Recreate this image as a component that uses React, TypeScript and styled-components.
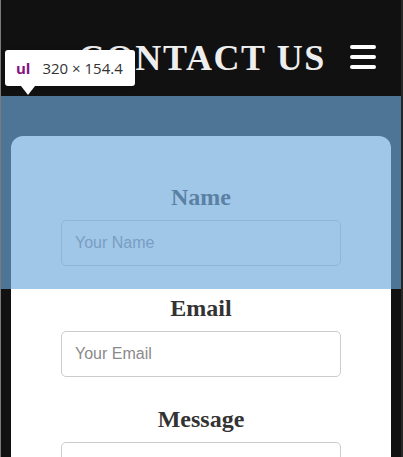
import React from "react";
import styled, { createGlobalStyle } from "styled-components";

const GlobalStyle = createGlobalStyle`
  html, body { margin: 0; padding: 0; background: #111; }
  * { box-sizing: border-box; }
`;

const Page = styled.div`
  position: relative;
  min-height: 457px;
  background: #111;
  border-left: 1px solid #7a7a7a;
  border-right: 2px solid #262626;
  overflow: hidden;
`;

const Header = styled.header`
  height: 96px;
  padding-top: 19px;
  display: grid;
  grid-template-columns: 1fr auto 1fr;
  align-items: center;
`;

const Title = styled.h1`
  grid-column: 2;
  margin: 0 0 0 2px;
  font-family: "Liberation Serif", "Times New Roman", serif;
  font-weight: 700;
  font-size: 36px;
  letter-spacing: 1.6px;
  color: #eee;
  white-space: nowrap;
`;

const MenuButton = styled.div`
  grid-column: 3;
  justify-self: end;
  margin-right: 25px;
  margin-top: -2px;
  display: flex;
  flex-direction: column;
  gap: 6px;
`;

const Bar = styled.span`
  display: block;
  width: 26px;
  height: 4px;
  border-radius: 2px;
  background: #fff;
`;

const Main = styled.main`
  padding: 40px 10px 0 10px;
`;

const Card = styled.form`
  background: #fff;
  border-radius: 12px;
  padding: 47px 50px 40px;
  display: flex;
  flex-direction: column;
  gap: 28px;
`;

const Field = styled.div`
  display: flex;
  flex-direction: column;
  gap: 9px;
`;

const Label = styled.label`
  display: block;
  text-align: center;
  font-family: "Liberation Serif", "Times New Roman", serif;
  font-weight: 700;
  font-size: 24px;
  line-height: 28px;
  color: #333;
`;

const Input = styled.input`
  width: 100%;
  height: 46px;
  border: 1px solid #ccc;
  border-radius: 5px;
  padding: 0 13px;
  font-family: "Liberation Sans", Arial, sans-serif;
  font-size: 16px;
  color: #333;
  background: #fff;
  outline: none;
  &::placeholder { color: #8a8a8a; }
`;

const Highlight = styled.div`
  position: absolute;
  left: 0;
  right: 0;
  top: 96px;
  height: 193px;
  background: rgba(111, 168, 220, 0.66);
  pointer-events: none;
`;

const Tooltip = styled.div`
  position: absolute;
  left: 4px;
  top: 50px;
  width: 130px;
  height: 36px;
  background: #fff;
  border-radius: 3px;
  box-shadow: 0 1px 4px rgba(0, 0, 0, 0.3);
  display: flex;
  align-items: center;
  gap: 12px;
  padding-left: 11px;
  font-family: "Open Sans", "Noto Sans", sans-serif;
  font-size: 15px;
  color: #333;
  &::after {
    content: "";
    position: absolute;
    left: 16px;
    bottom: -9px;
    border-left: 7px solid transparent;
    border-right: 7px solid transparent;
    border-top: 9px solid #fff;
  }
`;

const Tag = styled.span`
  color: #881280;
  font-weight: 700;
`;

export default function App() {
  return (
    <>
      <GlobalStyle />
      <Page>
        <Header>
          <Title>CONTACT US</Title>
          <MenuButton>
            <Bar />
            <Bar />
            <Bar />
          </MenuButton>
        </Header>
        <Main>
          <Card>
            <Field>
              <Label>Name</Label>
              <Input placeholder="Your Name" />
            </Field>
            <Field>
              <Label>Email</Label>
              <Input placeholder="Your Email" />
            </Field>
            <Field>
              <Label>Message</Label>
              <Input placeholder="Your Message" />
            </Field>
          </Card>
        </Main>
        <Highlight />
        <Tooltip>
          <Tag>ul</Tag>
          <span>320 × 154.4</span>
        </Tooltip>
      </Page>
    </>
  );
}
